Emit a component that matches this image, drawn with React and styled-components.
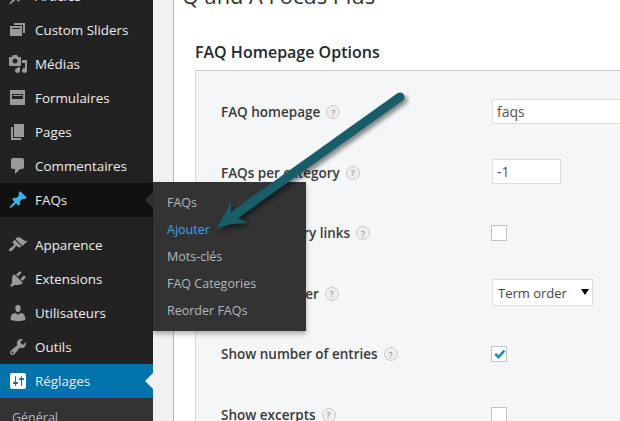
import React from 'react'
import styled, { createGlobalStyle } from 'styled-components'

const GlobalStyle = createGlobalStyle`
    html, body {
        margin: 0;
        padding: 0;
        height: 421px;
        overflow: hidden;
        background: #fff;
        font-family: "Open Sans", "Liberation Sans", sans-serif;
    }
`;

const Page = styled.div`
    position: relative;
    display: grid;
    grid-template-columns: 153px 1fr;
    width: 620px;
    height: 421px;
    overflow: hidden;
`;

const Sidebar = styled.nav`
    background: #222;
    height: 421px;
    position: relative;
    z-index: 2;
`;

const MenuList = styled.ul`
    list-style: none;
    margin: -21px 0 0;
    padding: 0;
`;

const MenuItem = styled.li`
    position: relative;
    display: flex;
    align-items: center;
    gap: 7px;
    height: 34px;
    padding-left: 8px;
    margin-bottom: ${(p) => (p.$gap ? '11px' : '0')};
    font-size: 13.4px;
    line-height: 32px;
    color: #eee;
    background: ${(p) => (p.$current ? '#0073aa' : p.$open ? '#111' : 'transparent')};

    svg {
        width: 20px;
        height: 20px;
        flex: none;
        fill: ${(p) => (p.$current ? '#fff' : p.$open ? '#35b1ee' : '#9a9a9a')};
    }
`;

const MenuLabel = styled.span`
    margin-top: 0;
`;

const Notch = styled.span`
    position: absolute;
    right: 0;
    top: 9px;
    border: 8px solid transparent;
    border-left-width: 0;
    border-right-color: ${(p) => p.$color};
`;

const Flyout = styled.ul`
    position: absolute;
    left: 153px;
    top: -1px;
    width: 153px;
    box-sizing: border-box;
    list-style: none;
    margin: 0;
    padding: 7px 0 7px;
    background: #333;
    box-shadow: 0 3px 5px rgba(0, 0, 0, 0.3);
`;

const FlyoutItem = styled.li`
    height: 27px;
    line-height: 27px;
    padding-left: 14px;
    font-size: 12.5px;
    color: ${(p) => (p.$active ? '#33a8e6' : '#b4b9be')};
`;

const SubMenu = styled.div`
    background: #333;
    padding: 11px 12px 0;
    height: 40px;
    font-size: 12.5px;
    color: #b4b9be;
`;

const Content = styled.main`
    display: grid;
    grid-template-columns: 21px 1fr;
    height: 421px;
`;

const Gutter = styled.div`
    background: #f1f1f1;
    border-right: 1px solid #b5b5b5;
`;

const Main = styled.div`
    background: #fff;
    padding-left: 8px;
`;

const Title = styled.h1`
    margin: -20px 0 0;
    height: 32px;
    line-height: 32px;
    font-size: 21.8px;
    font-weight: 400;
    color: #333;
`;

const SectionTitle = styled.h2`
    margin: 26px 0 0 13px;
    height: 32px;
    line-height: 29px;
    font-size: 16px;
    font-weight: 600;
    color: #23282d;
`;

const Panel = styled.section`
    margin: 0 0 0 13px;
    height: 360px;
    box-sizing: border-box;
    padding: 10px 0 0 25px;
    background: #f5f6f8;
    border-top: 1px solid #c9c9c9;
    border-left: 1px solid #d8d8d8;
`;

const Row = styled.div`
    display: grid;
    grid-template-columns: 271px 1fr;
    align-items: center;
    height: 60.5px;
`;

const Label = styled.div`
    display: flex;
    align-items: center;
    gap: 6px;
    margin-top: 2px;
    font-size: 13.5px;
    font-weight: 600;
    color: #3a3a3a;
    white-space: nowrap;
`;

const Help = styled.span`
    display: inline-flex;
    align-items: center;
    justify-content: center;
    width: 12px;
    height: 12px;
    border: 1px solid #c9c9c9;
    border-radius: 50%;
    background: #efefef;
    font-size: 9px;
    font-weight: 600;
    color: #999;
`;

const TextInput = styled.input`
    display: block;
    box-sizing: border-box;
    width: ${(p) => p.$width};
    height: 25px;
    padding: 0 4px;
    background: #fff;
    border: 1px solid #ddd;
    font-family: inherit;
    font-size: 14px;
    color: #555;
    outline: none;
`;

const SelectWrap = styled.div`
    position: relative;
    width: 101px;

    &::after {
        content: '';
        position: absolute;
        right: 4px;
        top: 10px;
        border: 4px solid transparent;
        border-top: 6px solid #000;
        border-bottom: 0;
    }
`;

const Select = styled.select`
    display: block;
    appearance: none;
    width: 101px;
    height: 27px;
    padding: 0 5px;
    background: #fff;
    border: 1px solid #ddd;
    border-radius: 0;
    font-family: inherit;
    font-size: 13px;
    color: #444;
`;

const CheckBox = styled.span`
    display: flex;
    align-items: center;
    justify-content: center;
    box-sizing: border-box;
    width: 16px;
    height: 16px;
    margin: 2px 0 0 -1px;
    background: #fff;
    border: 1px solid #c4c4c4;

    svg {
        width: 13px;
        height: 13px;
        fill: #1e8cbe;
    }
`;

const Arrow = styled.svg`
    position: absolute;
    left: 0;
    top: 0;
    z-index: 3;
    pointer-events: none;
    filter: drop-shadow(3px 3px 2px rgba(0, 0, 0, 0.45));
`;

const icons = {
    articles: 'M10.44 3.02l1.82-1.82 6.36 6.35-1.83 1.82c-1.05-.68-2.48-.57-3.41.36l-.75.75c-.92.93-1.04 2.35-.35 3.41l-1.83 1.82-2.41-2.41-2.8 2.79c-.42.42-3.38 2.71-3.8 2.29s1.86-3.39 2.28-3.81l2.79-2.79L4.1 9.36l1.83-1.82c1.05.69 2.48.57 3.4-.36l.75-.75c.93-.92 1.05-2.35.36-3.41z',
    sliders: 'M6 3h11v10h-2V5H6V3zM2 6h12v10H2V6zm2 2v1h8V8H4z',
    media: 'M13 11V4c0-.55-.45-1-1-1h-1.67L9 1H5L3.67 3H2c-.55 0-1 .45-1 1v7c0 .55.45 1 1 1h10c.55 0 1-.45 1-1zM7 4.5c1.38 0 2.5 1.12 2.5 2.5S8.38 9.5 7 9.5 4.5 8.38 4.5 7 5.62 4.5 7 4.5zM14 6h5v10.5c0 1.38-1.12 2.5-2.5 2.5S14 17.88 14 16.5s1.12-2.5 2.5-2.5c.17 0 .34.02.5.05V9h-3V6zm-4 8.05V13h2v3.5c0 1.38-1.12 2.5-2.5 2.5S7 17.88 7 16.5 8.12 14 9.5 14c.17 0 .34.02.5.05z',
    forms: 'M2 2h15v15H2V2zm2 4v5h11V6H4zm1 1h9v1H5V7z',
    pages: 'M6 15V2h10v13H6zm-1 1h8v2H3V5h2v11z',
    comments: 'M5 2h9c1.1 0 2 .9 2 2v7c0 1.1-.9 2-2 2h-2l-5 5v-5H5c-1.1 0-2-.9-2-2V4c0-1.1.9-2 2-2z',
    brush: 'M14.48 11.06L7.41 3.99l1.5-1.5c.5-.56 2.3-.47 3.51.32 1.21.8 1.43 1.28 2.91 2.1 1.18.64 2.45 1.26 4.45.85zm-.71.71L6.7 4.7 4.93 6.47c-.39.39-.39 1.02 0 1.41l1.06 1.06c.39.39.39 1.03 0 1.42-.6.6-1.43 1.11-2.21 1.69-.35.26-.7.53-1.01.84C1.43 13.23.33 15.17 1.16 16s2.77-.27 4.11-1.61c.31-.31.58-.65.84-1 .58-.78 1.09-1.61 1.69-2.21.39-.39 1.02-.39 1.41 0l1.06 1.06c.39.39 1.02.39 1.41 0z',
    plug: 'M13.11 4.36L9.87 7.6 8 5.73l3.24-3.24c.35-.34 1.05-.2 1.56.32.52.51.66 1.21.31 1.55zm-8 1.77l.91-1.12 9.01 9.01-1.19.84c-.71.71-2.63 1.16-3.82 1.16H6.14L4.9 17.26c-.59.59-1.54.59-2.12 0-.59-.58-.59-1.53 0-2.12l1.24-1.24v-3.88c0-1.13.4-3.19 1.09-3.89zm7.26 3.97l3.24-3.24c.34-.35 1.04-.21 1.55.31.52.51.66 1.21.31 1.55l-3.24 3.25z',
    user: 'M10 9.25c-2.27 0-2.73-3.44-2.73-3.44C7 4.02 7.82 2 9.97 2c2.16 0 2.98 2.02 2.71 3.81 0 0-.41 3.44-2.68 3.44zm0 2.57L12.72 10c2.39 0 4.52 2.33 4.52 4.53v2.49s-3.65 1.13-7.24 1.13c-3.65 0-7.24-1.13-7.24-1.13v-2.49c0-2.25 1.94-4.48 4.47-4.48z',
    wrench: 'M16.68 9.77c-1.34 1.34-3.3 1.67-4.95.99l-5.41 6.52c-.99.99-2.59.99-3.58 0s-.99-2.59 0-3.57l6.52-5.42c-.68-1.65-.35-3.61.99-4.95 1.28-1.28 3.12-1.62 4.72-1.06l-2.89 2.89 2.82 2.82 2.86-2.87c.53 1.58.18 3.39-1.08 4.65zM3.81 16.21c.4.39 1.04.39 1.43 0 .4-.4.4-1.04 0-1.43-.39-.4-1.03-.4-1.43 0-.39.39-.39 1.03 0 1.43z',
    settings: 'M18 16V4c0-1.1-.9-2-2-2H4c-1.1 0-2 .9-2 2v12c0 1.1.9 2 2 2h12c1.1 0 2-.9 2-2zM8 11h1c.55 0 1 .45 1 1s-.45 1-1 1H8v1.5c0 .28-.22.5-.5.5s-.5-.22-.5-.5V13H6c-.55 0-1-.45-1-1s.45-1 1-1h1V5.5c0-.28.22-.5.5-.5s.5.22.5.5V11zm5-2h-1c-.55 0-1-.45-1-1s.45-1 1-1h1V5.5c0-.28.22-.5.5-.5s.5.22.5.5V7h1c.55 0 1 .45 1 1s-.45 1-1 1h-1v5.5c0 .28-.22.5-.5.5s-.5-.22-.5-.5V9z',
};

const Icon = ({ d }) => (
    <svg viewBox="0 0 20 20">
        <path d={d} fillRule="evenodd" />
    </svg>
);

const flyoutLinks = ['FAQs', 'Ajouter', 'Mots-clés', 'FAQ Categories', 'Reorder FAQs'];

const App = () => {
    return (
        <Page>
            <GlobalStyle />
            <Sidebar>
                <MenuList>
                    <MenuItem><Icon d={icons.articles} /><MenuLabel>Articles</MenuLabel></MenuItem>
                    <MenuItem><Icon d={icons.sliders} /><MenuLabel>Custom Sliders</MenuLabel></MenuItem>
                    <MenuItem><Icon d={icons.media} /><MenuLabel>Médias</MenuLabel></MenuItem>
                    <MenuItem><Icon d={icons.forms} /><MenuLabel>Formulaires</MenuLabel></MenuItem>
                    <MenuItem><Icon d={icons.pages} /><MenuLabel>Pages</MenuLabel></MenuItem>
                    <MenuItem><Icon d={icons.comments} /><MenuLabel>Commentaires</MenuLabel></MenuItem>
                    <MenuItem $open $gap>
                        <Icon d={icons.articles} /><MenuLabel>FAQs</MenuLabel>
                        <Notch $color="#333" />
                        <Flyout>
                            {flyoutLinks.map((link) => (
                                <FlyoutItem key={link} $active={link === 'Ajouter'}>{link}</FlyoutItem>
                            ))}
                        </Flyout>
                    </MenuItem>
                    <MenuItem><Icon d={icons.brush} /><MenuLabel>Apparence</MenuLabel></MenuItem>
                    <MenuItem><Icon d={icons.plug} /><MenuLabel>Extensions</MenuLabel></MenuItem>
                    <MenuItem><Icon d={icons.user} /><MenuLabel>Utilisateurs</MenuLabel></MenuItem>
                    <MenuItem><Icon d={icons.wrench} /><MenuLabel>Outils</MenuLabel></MenuItem>
                    <MenuItem $current>
                        <Icon d={icons.settings} /><MenuLabel>Réglages</MenuLabel>
                        <Notch $color="#f1f1f1" />
                    </MenuItem>
                </MenuList>
                <SubMenu>Général</SubMenu>
            </Sidebar>

            <Content>
                <Gutter />
                <Main>
                    <Title>Q and A Focus Plus</Title>
                    <SectionTitle>FAQ Homepage Options</SectionTitle>
                    <Panel>
                        <Row>
                            <Label>FAQ homepage <Help>?</Help></Label>
                            <TextInput $width="160px" defaultValue="faqs" readOnly />
                        </Row>
                        <Row>
                            <Label>FAQs per category <Help>?</Help></Label>
                            <TextInput $width="69px" defaultValue="-1" readOnly />
                        </Row>
                        <Row>
                            <Label>Show category links <Help>?</Help></Label>
                            <CheckBox />
                        </Row>
                        <Row>
                            <Label>Category order <Help>?</Help></Label>
                            <SelectWrap>
                                <Select defaultValue="term">
                                    <option value="term">Term order</option>
                                </Select>
                            </SelectWrap>
                        </Row>
                        <Row>
                            <Label>Show number of entries <Help>?</Help></Label>
                            <CheckBox>
                                <svg viewBox="0 0 20 20">
                                    <path d="M2 10.5l3-3 3.5 3.5L16 2.500l3 3L8.500 17z" />
                                </svg>
                            </CheckBox>
                        </Row>
                        <Row>
                            <Label>Show excerpts <Help>?</Help></Label>
                            <CheckBox />
                        </Row>
                    </Panel>
                </Main>
            </Content>

            <Arrow width="620" height="421" viewBox="0 0 620 421">
                <path d="M400 97L236 214" stroke="#175e68" strokeWidth="9" strokeLinecap="round" fill="none" />
                <path d="M217 228L231 202L231 212L240 219L248 223L232 224Z" fill="#175e68" />
            </Arrow>
        </Page>
    );
}

export default App
